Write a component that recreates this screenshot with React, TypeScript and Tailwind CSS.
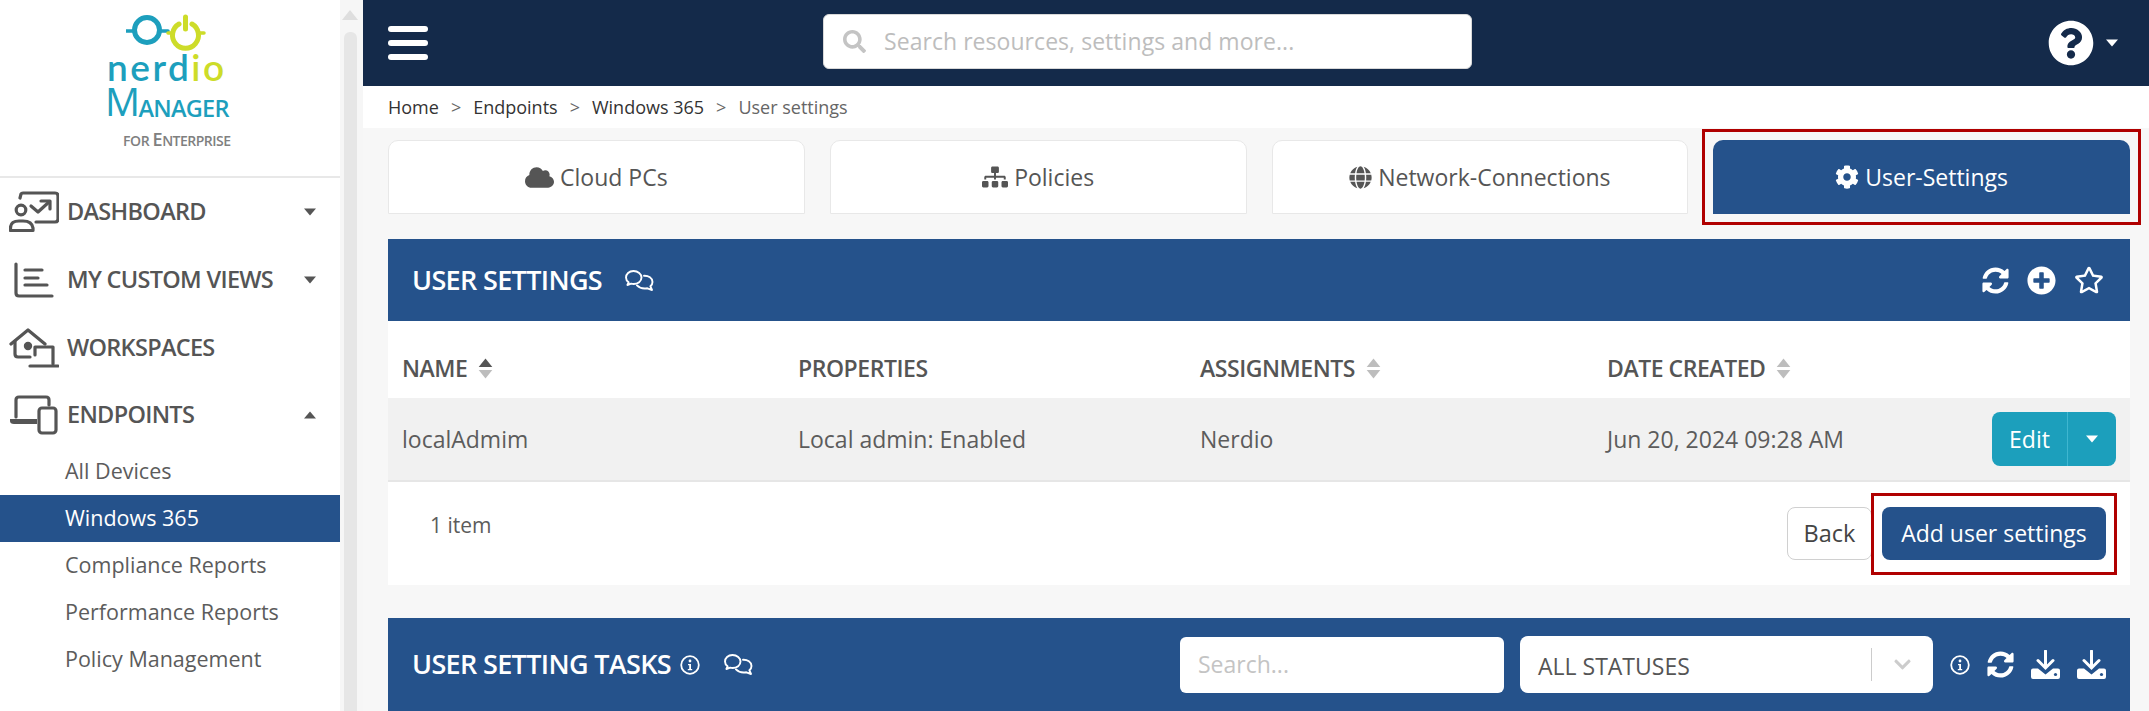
import React from "react";
import { FaCloud, FaSitemap, FaGlobe, FaCog, FaSearch, FaSyncAlt, FaPlusCircle, FaRegStar, FaQuestionCircle, FaChevronDown } from "react-icons/fa";

const Caret = ({ up = false, cls = "" }: { up?: boolean; cls?: string }) => (
  <svg width="14" height="8" viewBox="0 0 14 8" className={cls}>
    <path d={up ? "M7 0.5 L13 7.5 H1 Z" : "M1 0.5 H13 L7 7.5 Z"} fill="currentColor" />
  </svg>
);

const Logo = () => (
  <div className="h-[178px] border-b-2 border-[#e8e8e8] pl-[105px] pt-[14px] shrink-0 relative">
    <svg width="100" height="44" viewBox="0 0 100 44" className="ml-[21px] block">
      <circle cx="21" cy="16" r="12.5" fill="none" stroke="#1d9fbd" strokeWidth="5" />
      <path d="M0 17 H7 M35 17 H42" stroke="#1d9fbd" strokeWidth="3.5" strokeLinecap="round" />
      <path d="M53 10 A13 13 0 1 0 66 10" fill="none" stroke="#cddc29" strokeWidth="5" strokeLinecap="round" />
      <path d="M59.5 3 V15" stroke="#cddc29" strokeWidth="5" strokeLinecap="round" />
      <path d="M42 19 H47 M72 19 H78" stroke="#cddc29" strokeWidth="3.5" strokeLinecap="round" />
    </svg>
    <div className="h-[26px] -mt-[4px] text-[37px] leading-[26px] tracking-[2.5px] pl-[2px] font-['Lato',sans-serif] text-[#1d9fbd] font-semibold whitespace-nowrap">
      nerd<span className="text-[#cddc29]">io</span>
    </div>
    <div className="mt-[9px] h-[31px] flex items-end text-[#1d9fbd] font-['Open_Sans',sans-serif] leading-none whitespace-nowrap">
      <span className="text-[39px] tracking-[-1.5px] font-medium">M</span>
      <span className="text-[23.5px] tracking-[-0.75px] font-semibold">ANAGER</span>
    </div>
    <div className="mt-[10px] pl-[18px] flex items-end text-[#808080] font-['Open_Sans',sans-serif] font-semibold leading-none whitespace-nowrap">
      <span className="text-[14px] tracking-[-0.4px]">FOR&nbsp;</span>
      <span className="text-[18px] tracking-[-0.4px]">E</span>
      <span className="text-[14px] tracking-[-0.5px]">NTERPRISE</span>
    </div>
  </div>
);

const s = { fill: "none", stroke: "#555", strokeWidth: 3.2, strokeLinecap: "round" as const, strokeLinejoin: "round" as const };

const DashIcon = () => (
  <svg width="50" height="42" viewBox="0 0 50 42" {...s}>
    <path d="M11 7 L12 3 Q12.5 2 14 2 H46 Q49 2 49 5 V28 Q49 31 46 31 H27" />
    <circle cx="12" cy="19" r="4.8" />
    <path d="M1.5 39.5 V37 Q1.5 30 10 30 H14 Q23 30 24 37 V39.5 Z" />
    <path d="M22 15 L29 21 L40 11" />
    <path d="M32 10 H41 V18" />
  </svg>
);
const ViewsIcon = () => (
  <svg width="50" height="36" viewBox="0 0 50 36" {...s}>
    <path d="M7 2 V31 Q7 34 10 34 H43" />
    <path d="M16 8 H33 M16 16 H29 M16 23 H38" />
  </svg>
);
const WorkIcon = () => (
  <svg width="50" height="40" viewBox="0 0 50 40" {...s}>
    <path d="M2 16 L19 2 L36 16" />
    <path d="M6 13 V26 Q6 29 9 29 H21" />
    <circle cx="19" cy="18" r="2.6" fill="#555" />
    <path d="M26 27 V19 H44 V36" />
    <path d="M21 38 H49" />
  </svg>
);
const EndIcon = () => (
  <svg width="50" height="40" viewBox="0 0 50 40">
    <path d="M7 22 V5 Q7 2 10 2 H37 Q40 2 40 5 V10" {...s} />
    <path d="M1 24 H28 V29 H5 Q1 29 1 26 Z" fill="#555" />
    <rect x="30" y="13" width="17" height="25" rx="3" {...s} />
  </svg>
);

const NavRow = ({ icon, label, h, up = false, caret = true }: { icon: React.ReactNode; label: string; h: string; up?: boolean; caret?: boolean }) => (
  <div className={`${h} flex items-center pl-[9px] text-[#555]`}>
    <div className="w-[58px] flex items-center shrink-0">{icon}</div>
    <span className="text-[23.5px] font-semibold tracking-[-0.7px]">{label}</span>
    {caret && <Caret up={up} cls="ml-auto mr-[23px] text-[#555]" />}
  </div>
);

const Sub = ({ label, active = false }: { label: string; active?: boolean }) => (
  <div className={`h-[47px] flex items-center pl-[65px] text-[21.5px] ${active ? "bg-[#25528b] text-white" : "text-[#5c5c5c]"}`}>{label}</div>
);

const Sidebar = () => (
  <aside className="w-[340px] shrink-0 bg-white overflow-hidden">
    <Logo />
    <NavRow icon={<DashIcon />} label="DASHBOARD" h="h-[68px]" />
    <NavRow icon={<ViewsIcon />} label="MY CUSTOM VIEWS" h="h-[68px]" />
    <NavRow icon={<WorkIcon />} label="WORKSPACES" h="h-[68px]" caret={false} />
    <NavRow icon={<EndIcon />} label="ENDPOINTS" h="h-[66px]" up />
    <Sub label="All Devices" />
    <Sub label="Windows 365" active />
    <Sub label="Compliance Reports" />
    <Sub label="Performance Reports" />
    <Sub label="Policy Management" />
  </aside>
);

const Scrollbar = () => (
  <div className="w-[23px] shrink-0 bg-[#f6f6f6] flex flex-col items-center pr-[3px]">
    <svg width="16" height="10" viewBox="0 0 16 10" className="mt-[10px] text-[#dedede]"><path d="M8 0 L16 10 H0 Z" fill="currentColor" /></svg>
    <div className="w-[13px] flex-1 mt-[12px] rounded-t-[6px] bg-[#e6e6e6]" />
  </div>
);

const Topbar = () => (
  <header className="h-[86px] shrink-0 bg-[#142a4a] flex items-center pl-[25px] pr-[30px]">
    <div className="w-[40px] flex flex-col gap-[8px]">
      <div className="h-[6px] rounded-full bg-white" />
      <div className="h-[6px] rounded-full bg-white" />
      <div className="h-[6px] rounded-full bg-white" />
    </div>
    <div className="ml-[395px] mb-[3px] w-[649px] h-[55px] bg-white rounded-[6px] border border-[#d8d8d8] flex items-center pl-[19px]">
      <FaSearch className="text-[#c4c4c4] text-[23px]" />
      <span className="ml-[18px] text-[23px] text-[#bdbdbd] tracking-[0.05px]">Search resources, settings and more...</span>
    </div>
    <div className="ml-auto flex items-center gap-[11px]">
      <FaQuestionCircle className="text-white text-[46px]" />
      <Caret cls="text-white" />
    </div>
  </header>
);

const Crumbs = () => (
  <div className="h-[42px] shrink-0 bg-white flex items-center pl-[25px] text-[18px] text-[#333] gap-[12px]">
    <span>Home</span><span className="text-[#666]">&gt;</span>
    <span>Endpoints</span><span className="text-[#666]">&gt;</span>
    <span>Windows 365</span><span className="text-[#666]">&gt;</span>
    <span className="text-[#666]">User settings</span>
  </div>
);

const Tab = ({ icon, label, active = false }: { icon: React.ReactNode; label: string; active?: boolean }) => (
  <div className={`relative h-[74px] rounded-t-[10px] flex items-center justify-center gap-[6px] text-[23px] ${active ? "bg-[#25528b] text-white" : "bg-white border border-[#e8e8e8] text-[#555]"}`}>
    {icon}
    <span>{label}</span>
    {active && <div className="absolute -left-[11px] -right-[11px] -top-[11px] -bottom-[11px] border-[3px] border-[#b00000]" />}
  </div>
);

const Comments = () => (
  <svg width="29" height="21" viewBox="0 0 29 21" fill="none" stroke="white" strokeWidth="1.9" strokeLinejoin="round" strokeLinecap="round">
    <path d="M8.5 1 C4 1 1 4 1 7.5 C1 9.5 2 11.2 3.6 12.3 L2.4 15 L6.2 13.7 C7 13.9 7.7 14 8.5 14 C13 14 16.5 11.2 16.5 7.5 C16.5 4 13 1 8.5 1 Z" />
    <path d="M19 5.8 C23.5 5.6 27.5 8 27.5 12 C27.5 13.8 26.6 15.3 25.4 16.3 L27 20 L22.4 18.3 C18.6 19 14.4 18 12 15.4" />
  </svg>
);

const Info = ({ size = 20 }: { size?: number }) => (
  <svg width={size} height={size} viewBox="0 0 20 20" fill="none">
    <circle cx="10" cy="10" r="8.8" stroke="white" strokeWidth="1.8" />
    <circle cx="10" cy="6" r="1.4" fill="white" />
    <path d="M8 9 H11 V14 H12.2 V15.2 H7.8 V14 H9.2 V10.2 H8 Z" fill="white" />
  </svg>
);

const Download = () => (
  <svg width="29" height="29" viewBox="0 0 29 29">
    <path d="M14.5 1 V17 M7 10.5 L14.5 18 L22 10.5" stroke="white" strokeWidth="3" fill="none" strokeLinecap="round" />
    <path d="M2 18.5 H7 L14.5 24.5 L22 18.5 H27 Q29 18.5 29 20.5 V27 Q29 29 27 29 H2 Q0 29 0 27 V20.5 Q0 18.5 2 18.5 Z" fill="white" />
    <circle cx="24.5" cy="24.5" r="1.6" fill="#25528b" />
  </svg>
);

const Sort = ({ active = false }: { active?: boolean }) => (
  <svg width="15" height="21" viewBox="0 0 14 21" className="ml-[11px]">
    <path d="M7 0.5 L13.8 9 H0.2 Z" fill={active ? "#555" : "#bdbdbd"} strokeLinejoin="round" />
    <path d="M0.2 12 H13.8 L7 20.5 Z" fill="#bdbdbd" strokeLinejoin="round" />
  </svg>
);

const gridCols = "grid grid-cols-[396px_402px_407px_1fr] pl-[14px]";

const UserSettings = () => (
  <section className="mt-[25px] bg-white">
    <div className="h-[82px] bg-[#25528b] flex items-center pl-[24px] pr-[26px] text-white">
      <h2 className="text-[27px] font-semibold tracking-[-0.65px]">USER SETTINGS</h2>
      <div className="ml-[23px]"><Comments /></div>
      <div className="ml-auto flex items-center gap-[18px]">
        <FaSyncAlt className="text-[27px]" />
        <FaPlusCircle className="text-[29px]" />
        <FaRegStar className="text-[30px]" />
      </div>
    </div>
    <div className={`${gridCols} h-[77px] items-center pt-[18px] text-[23px] font-semibold tracking-[-0.45px] text-[#555]`}>
      <div className="flex items-center">NAME<Sort active /></div>
      <div>PROPERTIES</div>
      <div className="flex items-center">ASSIGNMENTS<Sort /></div>
      <div className="flex items-center">DATE CREATED<Sort /></div>
    </div>
    <div className={`${gridCols} h-[84px] items-center border-b-2 border-[#e6e6e6] bg-[#f1f1f1] text-[23px] text-[#5c5c5c] pr-[14px]`}>
      <div>localAdmim</div>
      <div>Local admin: Enabled</div>
      <div>Nerdio</div>
      <div className="flex items-center justify-between">
        <span>Jun 20, 2024 09:28 AM</span>
        <div className="w-[124px] h-[54px] rounded-[8px] bg-[#1c9fbc] text-white flex items-center">
          <span className="w-[76px] text-center border-r border-[#3fb6d0] h-full flex items-center justify-center">Edit</span>
          <span className="flex-1 flex justify-center"><Caret /></span>
        </div>
      </div>
    </div>
    <div className="h-[103px] flex pl-[42px] pr-[24px]">
      <span className="mt-[28px] text-[21px] leading-[30px] text-[#5c5c5c]">1 item</span>
      <div className="ml-auto mt-[25px] flex items-start gap-[10px]">
        <button className="h-[53px] w-[85px] border border-[#d0d0d0] rounded-[8px] bg-white text-[23.5px] text-[#444]">Back</button>
        <div className="relative">
          <button className="h-[53px] w-[224px] rounded-[8px] bg-[#25528b] text-white text-[23px]">Add user settings</button>
          <div className="absolute -left-[11px] -right-[11px] -top-[14px] -bottom-[15px] border-[3px] border-[#b00000]" />
        </div>
      </div>
    </div>
  </section>
);

const Tasks = () => (
  <section className="mt-[33px] h-[93px] shrink-0 bg-[#25528b] flex items-center pl-[24px] pr-[24px] text-white">
    <h2 className="text-[27px] font-semibold tracking-[-0.65px]">USER SETTING TASKS</h2>
    <div className="ml-[9px]"><Info /></div>
    <div className="ml-[24px]"><Comments /></div>
    <div className="ml-auto w-[324px] h-[56px] bg-white rounded-[6px] flex items-center pl-[18px] text-[23px] text-[#c4c4c4]">Search...</div>
    <div className="ml-[16px] w-[413px] h-[57px] bg-white rounded-[8px] flex items-center pl-[18px] text-[23px] text-[#555]">
      <span className="pt-[4px]">ALL STATUSES</span>
      <span className="ml-auto w-px h-[33px] bg-[#ccc]" />
      <FaChevronDown className="mx-[21px] text-[#ccc] text-[19px]" />
    </div>
    <div className="ml-[17px]"><Info /></div>
    <FaSyncAlt className="ml-[17px] text-[27px]" />
    <div className="ml-[17px]"><Download /></div>
    <div className="ml-[17px]"><Download /></div>
  </section>
);

const Tabs = () => (
  <div className="grid grid-cols-4 gap-[25px]">
    <Tab icon={<FaCloud className="text-[29px] text-[#555]" />} label="Cloud PCs" />
    <Tab icon={<FaSitemap className="text-[26px] text-[#555]" />} label="Policies" />
    <Tab icon={<FaGlobe className="text-[23px] text-[#555]" />} label="Network-Connections" />
    <Tab icon={<FaCog className="text-[24px]" />} label="User-Settings" active />
  </div>
);

export default function App() {
  return (
    <div className="flex h-[711px] w-full overflow-hidden bg-[#f7f7f7] font-['Open_Sans',sans-serif]">
      <Sidebar />
      <Scrollbar />
      <main className="flex-1 min-w-0 flex flex-col">
        <Topbar />
        <Crumbs />
        <div className="pl-[25px] pr-[19px] pt-[12px]">
          <Tabs />
          <UserSettings />
          <Tasks />
        </div>
      </main>
    </div>
  );
}
